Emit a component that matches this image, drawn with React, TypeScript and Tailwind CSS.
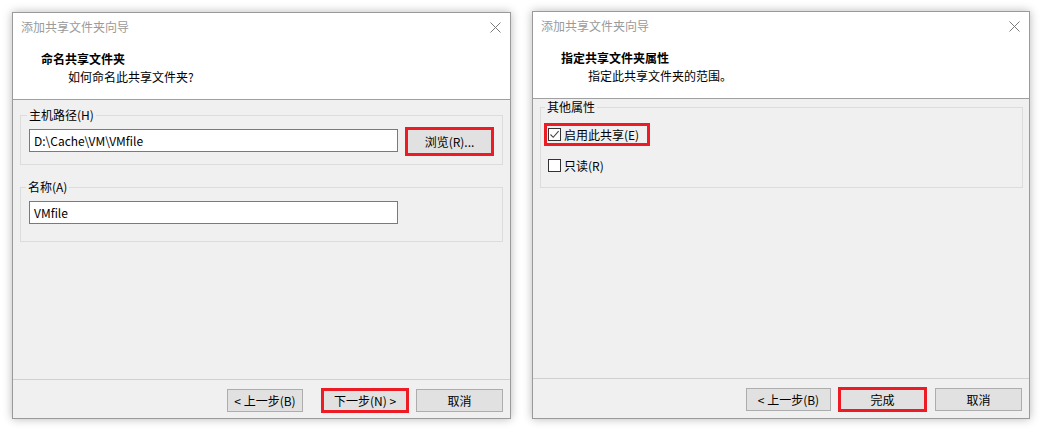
import React from "react";

const FONT = { fontFamily: '"Noto Sans CJK SC", "Noto Sans", sans-serif' };

function CloseX() {
  return (
    <svg width="11" height="11" viewBox="0 0 11 11" className="block">
      <path d="M0.5 0.5 L10.5 10.5 M10.5 0.5 L0.5 10.5" stroke="#7a7a7a" strokeWidth="1" fill="none" />
    </svg>
  );
}

function Header({ title, sub }: { title: string; sub: string }) {
  return (
    <div className="h-[87px] shrink-0 bg-white border-b border-[#a0a0a0] pt-[6px]">
      <div className="flex items-center justify-between pl-[8px] pr-[9px] h-[16px]">
        <span className="text-[12px] leading-[16px] text-[#9a9a9a]">添加共享文件夹向导</span>
        <CloseX />
      </div>
      <div className="mt-[16px] pl-[28px] text-[12px] leading-[16px] font-bold text-black">{title}</div>
      <div className="mt-[2px] pl-[55px] text-[12px] leading-[16px] text-black">{sub}</div>
    </div>
  );
}

function Btn({ label, w, red }: { label: string; w: number; red?: boolean }) {
  if (red) {
    return (
      <div
        className="h-[25px] border-[3px] border-[#ed1c24] bg-[#e1e1e1] flex items-center justify-center text-[12px] leading-[16px] text-black"
        style={{ width: w }}
      >
        {label}
      </div>
    );
  }
  return (
    <div
      className="h-[23px] border border-[#adadad] bg-[#e1e1e1] flex items-center justify-center text-[12px] leading-[16px] text-black"
      style={{ width: w }}
    >
      {label}
    </div>
  );
}

function GroupLabel({ text, left }: { text: string; left: string }) {
  return (
    <span
      className={`absolute top-[-9px] ${left} px-[2px] bg-[#f0f0f0] text-[12px] leading-[16px] text-black`}
    >
      {text}
    </span>
  );
}

function CheckBox({ checked }: { checked?: boolean }) {
  return (
    <div className="w-[13px] h-[13px] border border-[#333333] bg-white flex items-center justify-center shrink-0">
      {checked && (
        <svg width="11" height="11" viewBox="0 0 11 11" className="block">
          <path d="M1.5 5.5 L4.2 8.3 L9.6 2.2" stroke="#444" strokeWidth="1.1" fill="none" />
        </svg>
      )}
    </div>
  );
}

function LeftDialog() {
  return (
    <div className="w-[499px] h-[407px] mt-[12px] border border-[#9a9a9a] bg-[#f0f0f0] shadow-[0_0_9px_rgba(0,0,0,0.28)] flex flex-col">
      <Header title="命名共享文件夹" sub="如何命名此共享文件夹?" />
      <div className="flex-1 px-[7px] pt-[15px]">
        <div className="relative h-[50px] border border-[#dcdcdc] pt-[11px] pl-[8px]">
          <GroupLabel text="主机路径(H)" left="left-[6px]" />
          <div className="flex items-start">
            <div className="mt-[2px] w-[369px] h-[23px] border border-[#7a7a7a] bg-white flex items-center pl-[4px] text-[12px] leading-[16px] text-black">
              D:\Cache\VM\VMfile
            </div>
            <div className="ml-[7px] w-[89px] h-[29px] border-[3px] border-[#ed1c24] bg-[#e1e1e1] flex items-center justify-center text-[12px] leading-[16px] text-black">
              浏览(R)...
            </div>
          </div>
        </div>
        <div className="relative mt-[22px] h-[55px] border border-[#dcdcdc] pt-[13px] pl-[8px]">
          <GroupLabel text="名称(A)" left="left-[5px]" />
          <div className="w-[369px] h-[23px] border border-[#7a7a7a] bg-white flex items-center pl-[4px] text-[12px] leading-[16px] text-black">
            VMfile
          </div>
        </div>
      </div>
      <div className="h-[39px] shrink-0 border-t border-[#d0d0d0] pt-[8px] pr-[7px]">
        <div className="h-[25px] flex items-center justify-end">
          <Btn label="< 上一步(B)" w={76} />
          <div className="ml-[18px]">
            <Btn label="下一步(N) >" w={88} red />
          </div>
          <div className="ml-[7px]">
            <Btn label="取消" w={87} />
          </div>
        </div>
      </div>
    </div>
  );
}

function RightDialog() {
  return (
    <div className="w-[498px] h-[408px] mt-[11px] border border-[#9a9a9a] bg-[#f0f0f0] shadow-[0_0_9px_rgba(0,0,0,0.28)] flex flex-col">
      <Header title="指定共享文件夹属性" sub="指定此共享文件夹的范围。" />
      <div className="flex-1 px-[6px] pl-[7px] pt-[8px]">
        <div className="relative h-[81px] border border-[#dcdcdc] pt-[15px] pl-[3px]">
          <GroupLabel text="其他属性" left="left-[4px]" />
          <div className="w-[106px] h-[23px] border-[3px] border-[#ed1c24] flex items-center pl-[1px]">
            <CheckBox checked />
            <span className="ml-[3px] text-[12px] leading-[16px] text-black">启用此共享(E)</span>
          </div>
          <div className="mt-[11px] h-[17px] flex items-center pl-[4px]">
            <CheckBox />
            <span className="ml-[3px] text-[12px] leading-[16px] text-black">只读(R)</span>
          </div>
        </div>
      </div>
      <div className="h-[40px] shrink-0 border-t border-[#d0d0d0] pt-[9px] pr-[7px]">
        <div className="h-[23px] flex items-center justify-end">
          <Btn label="< 上一步(B)" w={85} />
          <div className="ml-[7px]">
            <Btn label="完成" w={89} red />
          </div>
          <div className="ml-[8px]">
            <Btn label="取消" w={87} />
          </div>
        </div>
      </div>
    </div>
  );
}

export default function App() {
  return (
    <div className="w-[1045px] h-[432px] bg-white overflow-hidden" style={FONT}>
      <div className="flex items-start pl-[12px] gap-[21px]">
        <LeftDialog />
        <RightDialog />
      </div>
    </div>
  );
}
